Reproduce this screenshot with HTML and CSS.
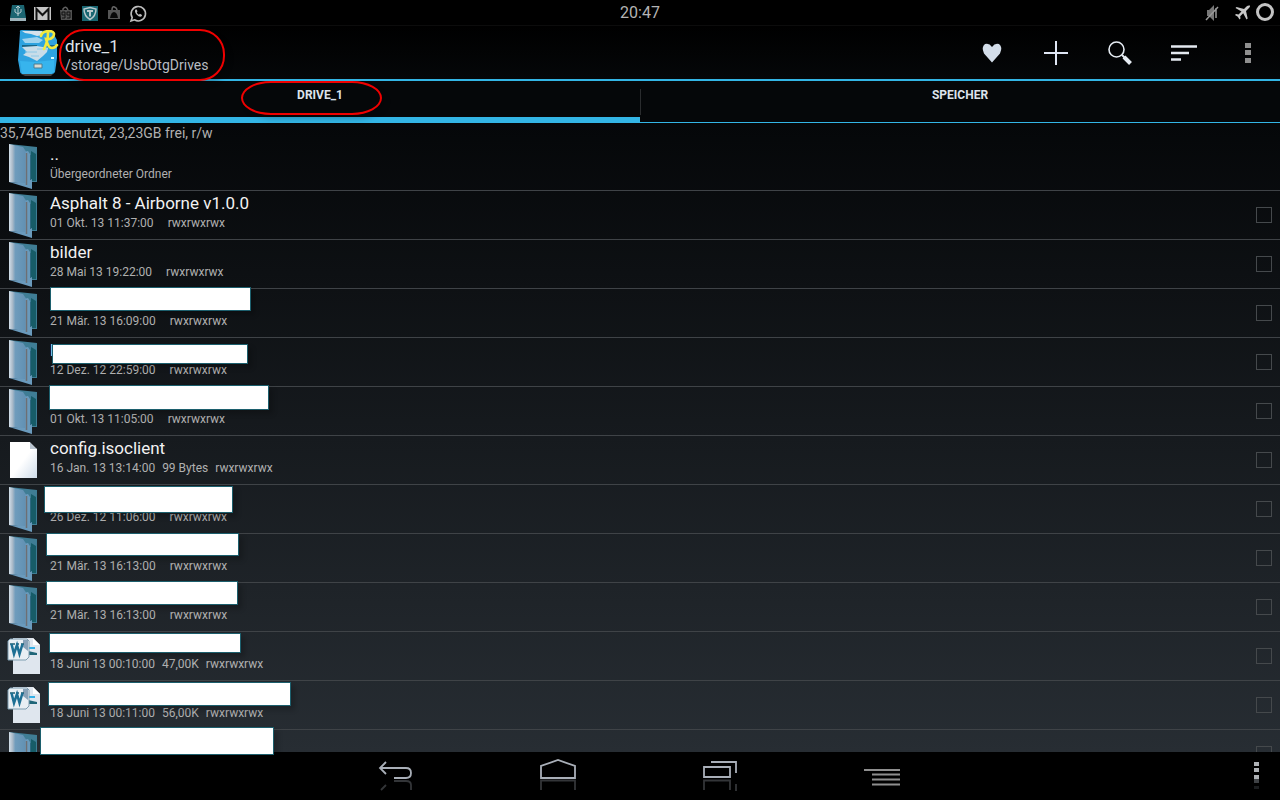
FILE: index.html
```html
<!DOCTYPE html>
<html lang="de">
<head>
    <meta charset="UTF-8">
    <meta name="viewport" content="width=device-width, initial-scale=1.0">
    <title>drive_1</title>
    <link rel="stylesheet" href="styles.css">
</head>
<body>

    <!-- Shared file icons -->
    <svg class="sprite" aria-hidden="true">
        <defs>
            <linearGradient id="cover" x1="0" x2="1">
                <stop offset="0" stop-color="#d3e0ea"/>
                <stop offset="0.2" stop-color="#a9b9c8"/>
                <stop offset="0.35" stop-color="#6f9cbc"/>
                <stop offset="1" stop-color="#5f8fb2"/>
            </linearGradient>
            <linearGradient id="sheet" x1="0" y1="0" x2="1" y2="1">
                <stop offset="0.5" stop-color="#ffffff"/>
                <stop offset="1" stop-color="#cfdcea"/>
            </linearGradient>
        </defs>
        <symbol id="folder" viewBox="0 0 32 46">
            <path d="M1 0 L29 3 V38 H24 L1 38 Z" fill="#3f7d95"/>
            <path d="M23 7 L28 10 V37 L23 37 Z" fill="#175c68"/>
            <path d="M1 0 L15 3 L19 9 V40 L1 38 Z" fill="url(#cover)"/>
            <path d="M17 10 Q17 7 20 7 L22 10 V36 L24 35 V45 L1 38 L17 39 Z" fill="#6a9abc"/>
            <path d="M18.500 9 V41" stroke="#6d6f74" stroke-width="1.500"/>
            <path d="M22.500 11 V36" stroke="#2d6780" stroke-width="1"/>
        </symbol>
        <symbol id="file" viewBox="0 0 32 46">
            <path d="M2 4 H22 L29 11 V40 H2 Z" fill="url(#sheet)"/>
            <path d="M22 4 V11 H29 Z" fill="#b9c4cf"/>
            <path d="M22.500 4 L29 10.500" stroke="#14181b" stroke-width="1"/>
        </symbol>
        <symbol id="word" viewBox="0 0 34 46">
            <path d="M6 4 H26 L33 11 V40 H6 Z" fill="#dfe6ee"/>
            <path d="M26 4 V11 H33 Z" fill="#ffffff"/>
            <path d="M21 14 H28" stroke="#35b0e6" stroke-width="2"/>
            <path d="M21 17 L30 19 V21 H21 Z" fill="#1f6578"/>
            <path d="M3 5 H20 L22 7 V23 L19 26 H1 V7 Z" fill="#e9eff4" stroke="#7f9db0" stroke-width="1"/>
            <path d="M16 6 H21 V17 L16 13 Z" fill="#8aa2b8"/>
            <path d="M3 10 H8 M9 10 H12 M14 10 H17" stroke="#1d5f73" stroke-width="1.500"/>
            <path d="M4.500 10 L7 20 L10 11 L12.500 20 L15.500 10" fill="none" stroke="#1d6f94" stroke-width="2.500"/>
        </symbol>
    </svg>

    <!-- Status bar -->
    <div class="status-bar">
        <div class="notifications">
            <svg viewBox="0 0 24 24"><path d="M6 4 H18 L20 17 H4 Z" fill="#1c6571"/><path d="M4 17 H20 V20 H4 Z" fill="#9fb4bb"/><path d="M12 6 V15 M9 8 V11 L12 13 L15 11 V8 M10 7 L12 5 L14 7" fill="none" stroke="#b9cdd2"/></svg>
            <svg viewBox="0 0 24 24"><path d="M4 6 H21 V19 H4 Z" fill="#c4c4c4"/><path d="M6.500 19 V8 L12.500 14 L18.500 8 V19" fill="none" stroke="#111" stroke-width="2"/></svg>
            <svg viewBox="0 0 24 24"><path d="M6 9 H18 V19 H7 Z" fill="#505050"/><path d="M9 9 V8 Q12 4 14 9" fill="none" stroke="#606060" stroke-width="1.500"/><path d="M8 11 H11 V14 H8 Z M11 14 V17 H8 M13 11 H16 V14 H13 Z M16 14 V17 H13" fill="none" stroke="#111"/></svg>
            <svg viewBox="0 0 24 24"><path d="M4 5 H20 V20 H4 Z" fill="#196672"/><path d="M12 6.500 L18 8 Q18 15 12 18.500 Q6 15 6 8 Z" fill="none" stroke="#b8c8cc" stroke-width="1.500"/><path d="M9 10 H15 M12 10 V15.500" stroke="#b8c8cc" stroke-width="2"/></svg>
            <svg viewBox="0 0 24 24"><path d="M6 9 H18 V18 H6 Z" fill="#555"/><path d="M10 9 Q10 5 12.500 6 Q15 7 15 9" fill="none" stroke="#666" stroke-width="1.500"/><path d="M8 17 Q9 11 12 11 Q15 11 16 17 Z" fill="#080808"/></svg>
            <svg viewBox="0 0 24 24"><path d="M5 20 L6.200 16.500 A7.200 7.200 0 1 1 8.500 18.800 Z" fill="none" stroke="#bdbdbd" stroke-width="1.600"/><path d="M9.500 8.500 Q8 10 10.500 13.500 Q14 17 15.800 15 L16 14 L14 12.800 L12.800 13.800 Q11 12.500 10.800 11.300 L11.500 10.500 L10.700 8.500 Z" fill="#bdbdbd"/></svg>
        </div>
        <time class="clock">20:47</time>
        <div class="system">
            <svg viewBox="0 0 24 24"><path d="M8 9 H10 L15 4 V20 L10 15 H8 Z" fill="#777"/><path d="M17 7 V17 M7 19 L19 6" stroke="#999" stroke-width="1.500"/></svg>
            <svg viewBox="0 0 24 24"><path d="M21 4.500 Q19 4 17.500 5.500 L15 8 L7.500 6 L6.500 7 L12.500 10.500 L9.500 13.500 L7 13 L6 14 L8.800 15.700 L10.500 18.500 L11.500 17.500 L11.200 15.200 L14.200 12.200 L17.500 18.500 L18.700 17.500 L17 10 L19.500 7.500 Q21.500 6 21 4.500 Z" fill="#c8c8c8"/></svg>
            <svg viewBox="0 0 24 24"><circle cx="12" cy="11" r="7.500" fill="none" stroke="#c4c4c4" stroke-width="3"/></svg>
        </div>
    </div>

    <!-- Action bar -->
    <header class="action-bar">
        <svg class="logo" viewBox="0 0 42 46" aria-hidden="true">
            <path d="M4 44 H36 L34 46 H8 Z" fill="#454545"/>
            <path d="M3 2 Q2 0 5 0 L35 1 L40 10 V28 L38 42 Q37 44 35 44 H6 Q3 44 3 41 L1 30 L2 16 Z" fill="#2ea3e0"/>
            <path d="M5 1 H25 L26 5 L20 6 L14 4 L8 3 Z" fill="#d5e2ec"/>
            <path d="M5 9 L20 7 L26 10 L22 13 L8 13 Z" fill="#9fd3ee"/>
            <path d="M5 16 H20 M30 16 H38" stroke="#12536c" stroke-width="1.500"/>
            <path d="M5 17 L20 16 L31 18 L30 22 L26 26 L20 31 L12 27 L6 25 L10 22 Z" fill="#c9dde9"/>
            <path d="M8 22 H20 M14 26 H22 M20 19 H30" stroke="#8cc8e6" stroke-width="1"/>
            <path d="M3 31 L18 32 L37 30 V42 L34 44 H5 Z" fill="#37b4ed"/>
            <path d="M17 34 H25 V38 H17 Z" fill="#d8d8d0" stroke="#4d7c91"/>
            <path d="M34 28 H37" stroke="#dff" stroke-width="2"/>
            <path d="M27 19 Q31 11 31 3 M24 6 Q25 1 33 1 Q39 2 36 7 Q33 10 29 9 Q31 18 35 18 Q38 18 40 15" fill="none" stroke="#f3ea3d" stroke-width="2.600" stroke-linecap="round"/>
        </svg>
        <div class="location">
            <h1>drive_1</h1>
            <p>/storage/UsbOtgDrives</p>
        </div>
        <div class="actions">
            <button type="button" aria-label="Lesezeichen"><svg viewBox="0 0 28 28"><path d="M14 23.500 L6 14.500 Q3 8 7 5 Q11 3.500 14 8 Q17 3.500 21 5 Q25 8 22 14.500 Z" fill="#d3dde9"/></svg></button>
            <button type="button" aria-label="Neu"><svg viewBox="0 0 28 28"><path d="M14 2 V26 M2 14 H26" stroke="#dfe6f4" stroke-width="2"/></svg></button>
            <button type="button" aria-label="Suchen"><svg viewBox="0 0 28 28"><circle cx="10.500" cy="10.500" r="7.500" fill="none" stroke="#e6ecf3" stroke-width="1.600"/><path d="M16 16 L18.500 18.500" stroke="#e6ecf3" stroke-width="2"/><path d="M18 18 L24.500 24.500" stroke="#e6ecf3" stroke-width="4"/></svg></button>
            <button type="button" aria-label="Sortieren"><svg viewBox="0 0 28 28"><path d="M1 7.500 H27 M1 14 H19 M1 20.500 H11" stroke="#e4e9f0" stroke-width="2.600"/></svg></button>
            <button type="button" aria-label="Mehr"><svg viewBox="0 0 28 28"><path d="M11 4 H17 V9 H11 Z M11 11 H17 V16 H11 Z M11 19 H17 V24 H11 Z" fill="#8f8f8f"/></svg></button>
        </div>
    </header>

    <nav class="tabs">
        <button type="button" class="tab active">DRIVE_1</button>
        <button type="button" class="tab">SPEICHER</button>
    </nav>

    <main class="browser">
        <p class="usage">35,74GB benutzt, 23,23GB frei, r/w</p>
        <ul class="files">
            <li class="row">
                <svg class="icon"><use href="#folder"/></svg>
                <div class="entry"><span class="name">..</span><div class="meta"><span>Übergeordneter Ordner</span></div></div>
            </li>
            <li class="row">
                <svg class="icon"><use href="#folder"/></svg>
                <div class="entry"><span class="name">Asphalt 8 - Airborne v1.0.0</span><div class="meta"><span>01 Okt. 13 11:37:00</span><span></span><span>rwxrwxrwx</span></div></div>
                <input type="checkbox" aria-label="Asphalt 8 - Airborne v1.0.0">
            </li>
            <li class="row">
                <svg class="icon"><use href="#folder"/></svg>
                <div class="entry"><span class="name">bilder</span><div class="meta"><span>28 Mai 13 19:22:00</span><span></span><span>rwxrwxrwx</span></div></div>
                <input type="checkbox" aria-label="bilder">
            </li>
            <li class="row">
                <svg class="icon"><use href="#folder"/></svg>
                <div class="entry"><span class="name"></span><div class="meta"><span>21 Mär. 13 16:09:00</span><span></span><span>rwxrwxrwx</span></div></div>
                <span class="mask mask-a"></span>
                <input type="checkbox" aria-label="Ordner 3">
            </li>
            <li class="row">
                <svg class="icon"><use href="#folder"/></svg>
                <div class="entry"><span class="name">l</span><div class="meta"><span>12 Dez. 12 22:59:00</span><span></span><span>rwxrwxrwx</span></div></div>
                <span class="mask mask-b"></span>
                <input type="checkbox" aria-label="Ordner 4">
            </li>
            <li class="row">
                <svg class="icon"><use href="#folder"/></svg>
                <div class="entry"><span class="name"></span><div class="meta"><span>01 Okt. 13 11:05:00</span><span></span><span>rwxrwxrwx</span></div></div>
                <span class="mask mask-c"></span>
                <input type="checkbox" aria-label="Ordner 5">
            </li>
            <li class="row">
                <svg class="icon"><use href="#file"/></svg>
                <div class="entry"><span class="name">config.isoclient</span><div class="meta"><span>16 Jan. 13 13:14:00</span><span>99 Bytes</span><span>rwxrwxrwx</span></div></div>
                <input type="checkbox" aria-label="config.isoclient">
            </li>
            <li class="row">
                <svg class="icon"><use href="#folder"/></svg>
                <div class="entry"><span class="name"></span><div class="meta"><span>26 Dez. 12 11:06:00</span><span></span><span>rwxrwxrwx</span></div></div>
                <span class="mask mask-d"></span>
                <input type="checkbox" aria-label="Ordner 7">
            </li>
            <li class="row">
                <svg class="icon"><use href="#folder"/></svg>
                <div class="entry"><span class="name"></span><div class="meta"><span>21 Mär. 13 16:13:00</span><span></span><span>rwxrwxrwx</span></div></div>
                <span class="mask mask-e"></span>
                <input type="checkbox" aria-label="Ordner 8">
            </li>
            <li class="row">
                <svg class="icon"><use href="#folder"/></svg>
                <div class="entry"><span class="name"></span><div class="meta"><span>21 Mär. 13 16:13:00</span><span></span><span>rwxrwxrwx</span></div></div>
                <span class="mask mask-f"></span>
                <input type="checkbox" aria-label="Ordner 9">
            </li>
            <li class="row">
                <svg class="icon"><use href="#word"/></svg>
                <div class="entry"><span class="name"></span><div class="meta"><span>18 Juni 13 00:10:00</span><span>47,00K</span><span>rwxrwxrwx</span></div></div>
                <span class="mask mask-g"></span>
                <input type="checkbox" aria-label="Dokument 1">
            </li>
            <li class="row">
                <svg class="icon"><use href="#word"/></svg>
                <div class="entry"><span class="name"></span><div class="meta"><span>18 Juni 13 00:11:00</span><span>56,00K</span><span>rwxrwxrwx</span></div></div>
                <span class="mask mask-h"></span>
                <input type="checkbox" aria-label="Dokument 2">
            </li>
            <li class="row">
                <svg class="icon"><use href="#folder"/></svg>
                <div class="entry"></div>
                <span class="mask mask-i"></span>
                <input type="checkbox" aria-label="Ordner 10">
            </li>
        </ul>
    </main>

    <!-- Navigation bar, each icon with a faint reflection -->
    <footer class="nav-bar">
        <button type="button" aria-label="Zurück">
            <svg viewBox="0 0 36 36"><g fill="none" stroke="#a9afb8" stroke-width="1.800"><path d="M2 12 H28 Q33 12 33 17 Q33 22 28 22 H16 M8 6 L2 12 L8 18"/><path d="M16 25 H28 Q33 25 33 29 V34 M8 29 L3 34" opacity="0.300"/></g></svg>
        </button>
        <button type="button" aria-label="Start">
            <svg viewBox="0 0 36 36"><g fill="none" stroke="#a9afb8" stroke-width="1.800"><path d="M1 22 V10 L18 4 L35 10 V22 Z"/><path d="M1 34 V24.500 H35 V34" opacity="0.300"/></g></svg>
        </button>
        <button type="button" aria-label="Letzte Apps">
            <svg viewBox="0 0 36 36"><g fill="none" stroke="#a9afb8" stroke-width="1.800"><path d="M2 11 H28 V21 H2 Z M9 6 H34 V17"/><path d="M2 34 V24.500 H28 V34 M34 28 V35" opacity="0.300"/></g></svg>
        </button>
        <button type="button" aria-label="Menü">
            <svg viewBox="0 0 36 36"><path d="M0 14 H36 M8 18.500 H36 M8 23.500 H36 M8 28.500 H36" stroke="#8f8f8f" stroke-width="2"/></svg>
        </button>
        <button type="button" class="more" aria-label="Optionen">
            <svg viewBox="0 0 36 36"><path d="M16 6 H21 V10 H16 Z M16 12 H21 V16 H16 Z M16 19 H21 V23 H16 Z" fill="#aeb1b5"/><path d="M16 23 H21 V27 H16 Z" fill="#3f4245"/><path d="M16 30 H21 V33 H16 Z" fill="#1b1d1f"/></svg>
        </button>
    </footer>

</body>
</html>
```
FILE: styles.css
```css
*, *::before, *::after {
    box-sizing: border-box;
}

body {
    display: flex;
    flex-direction: column;
    height: 100vh;
    margin: 0;
    overflow: hidden;
    background-color: #000;
    color: #f2f2f2;
    font-family: Roboto, "Open Sans", sans-serif;
}

h1, p, ul {
    margin: 0;
    padding: 0;
    font-weight: 400;
}

button {
    padding: 0;
    border: 0;
    background: none;
    color: inherit;
    font-family: inherit;
    cursor: pointer;
}

.sprite {
    position: absolute;
    width: 0;
    height: 0;
}

/* Status bar */
.status-bar {
    display: grid;
    grid-template-columns: 1fr auto 1fr;
    align-items: center;
    flex: none;
    height: 26px;
    border-bottom: 1px solid #0c0c0c;
}
.status-bar svg {
    width: 24px;
    height: 24px;
}
.notifications, .system {
    display: flex;
    padding-left: 6px;
}
.system {
    justify-content: flex-end;
    padding: 0 3px 0 0;
}
.system svg:first-child {
    margin-right: 6px;
}
.clock {
    color: #b4b4b4;
    font-size: 16px;
    line-height: 24px;
}

/* Action bar */
.action-bar {
    display: flex;
    align-items: center;
    flex: none;
    height: 55px;
    padding-left: 17px;
    border-bottom: 2px solid #33b5e5;
    background: linear-gradient(#000, #050709);
}
.logo {
    width: 42px;
    height: 46px;
    margin-right: 6px;
}
.location {
    position: relative;
    padding-top: 4px;
    color: #b8bcc2;
    font-size: 14px;
    line-height: 18px;
}
.location h1 {
    color: #dfe3ea;
    font-size: 17px;
    line-height: 20px;
}
.actions {
    display: flex;
    margin-left: auto;
}
.actions button {
    width: 64px;
    height: 53px;
}
.actions svg {
    display: block;
    width: 28px;
    height: 28px;
    margin: auto;
}

/* Red marker rings */
.location::after, .tab.active::after {
    content: "";
    position: absolute;
    border: 2px solid #f00000;
    box-shadow: 4px 4px 5px rgba(0, 0, 0, 0.2);
    pointer-events: none;
}
.location::after {
    top: -3px;
    left: -6px;
    width: 166px;
    height: 52px;
    border-radius: 25px;
}
.tab.active::after {
    top: 0;
    left: calc(50% - 79px);
    width: 141px;
    height: 34px;
    border-radius: 30px / 17px;
}

/* Tabs */
.tabs {
    display: flex;
    flex: none;
    height: 42px;
    background-color: #050709;
}
.tab {
    position: relative;
    flex: 1;
    padding-bottom: 14px;
    border-bottom: 1px solid #33b5e5;
    color: #dde3ec;
    font-size: 12px;
    font-weight: 700;
    line-height: 14px;
}
.tab.active {
    padding-bottom: 8px;
    border-bottom-width: 6px;
}
.tab + .tab::before {
    content: "";
    position: absolute;
    top: 8px;
    bottom: 7px;
    left: 0;
    width: 1px;
    background-color: #2a2c2e;
}

/* File list */
.browser {
    flex: 1;
    min-height: 0;
    background: linear-gradient(#050709, #272d33);
}
.usage {
    padding-top: 2px;
    color: #b0b0b0;
    font-size: 14px;
    line-height: 17px;
}
.files {
    list-style: none;
}
.row {
    position: relative;
    display: flex;
    height: 49px;
    padding-right: 8px;
    border-bottom: 1px solid #3f4347;
}
.icon {
    width: 34px;
    height: 46px;
    margin: 2px 9px 0 7px;
}
.entry {
    flex: 1;
}
.name {
    display: block;
    height: 24px;
    font-size: 17px;
    line-height: 24px;
}
.meta {
    display: flex;
    gap: 7px;
    color: #b0b0b0;
    font-size: 12px;
    line-height: 16px;
}
.row input {
    appearance: none;
    width: 16px;
    height: 16px;
    margin: 16px 0 0;
    border: 1px solid #45494c;
}

/* Blanked out names */
.mask {
    position: absolute;
    z-index: 2;
    border: 1px solid #1c5f6d;
    background-color: #fff;
    box-shadow: 4px 4px 5px rgba(0, 0, 0, 0.2);
}
.mask-a { top: -2px; left: 50px; width: 201px; height: 24px; }
.mask-b { top: 6px; left: 52px; width: 196px; height: 20px; }
.mask-c { top: -2px; left: 49px; width: 220px; height: 25px; }
.mask-d { top: 1px; left: 44px; width: 189px; height: 27px; }
.mask-e { top: -1px; left: 46px; width: 193px; height: 23px; }
.mask-f { top: -2px; left: 46px; width: 192px; height: 24px; }
.mask-g { top: 1px; left: 49px; width: 192px; height: 20px; }
.mask-h { top: 1px; left: 48px; width: 243px; height: 24px; }
.mask-i { top: -3px; left: 40px; width: 234px; height: 28px; }

/* Navigation bar */
.nav-bar {
    position: relative;
    z-index: 1;
    display: flex;
    justify-content: center;
    flex: none;
    height: 48px;
    padding-right: 2px;
    background-color: #000;
}
.nav-bar button {
    width: 162px;
}
.nav-bar svg {
    display: block;
    width: 36px;
    height: 36px;
    margin: 0 auto 4px;
}
.nav-bar .more {
    position: absolute;
    top: 4px;
    right: 0;
    width: 48px;
}
```
